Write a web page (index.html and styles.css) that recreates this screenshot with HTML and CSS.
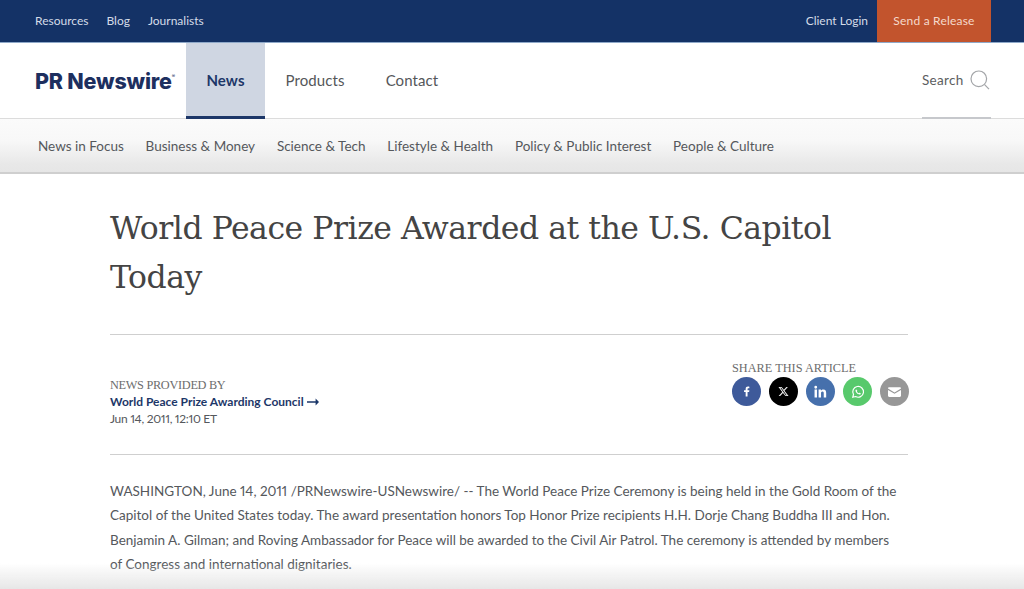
FILE: index.html
```html
<!DOCTYPE html>
<html lang="en">
<head>
<meta charset="utf-8">
<title>World Peace Prize Awarded at the U.S. Capitol Today</title>
<link rel="stylesheet" href="styles.css">
</head>
<body>
<header>
  <div class="topbar">
    <nav class="top-left">
      <a>Resources</a><a>Blog</a><a>Journalists</a>
    </nav>
    <div class="top-right">
      <a>Client Login</a>
      <a class="send">Send a Release</a>
    </div>
  </div>
  <div class="mainbar">
    <div class="logo">PR Newswire<sup class="reg">®</sup></div>
    <nav class="mainnav">
      <a class="active">News</a><a>Products</a><a>Contact</a>
    </nav>
    <div class="search">
      <span>Search</span>
      <svg class="search-icon" viewBox="0 0 20 20" width="20" height="20" fill="none" stroke="#a3a5a8" stroke-width="1.2"><circle cx="8.8" cy="8.8" r="7.8"/><path d="M14.6 14.6 19 19.2"/></svg>
    </div>
  </div>
  <nav class="subnav">
    <a>News in Focus</a><a>Business &amp; Money</a><a>Science &amp; Tech</a><a>Lifestyle &amp; Health</a><a>Policy &amp; Public Interest</a><a>People &amp; Culture</a>
  </nav>
</header>
<main class="article">
  <h1>World Peace Prize Awarded at the U.S. Capitol Today</h1>
  <div class="meta">
    <div class="provider">
      <div class="label">NEWS PROVIDED BY</div>
      <a class="org">World Peace Prize Awarding Council <svg class="arrow" viewBox="0 0 12 8" width="12" height="8"><path d="M0 3.2h8.6V.6L12 4 8.6 7.4V4.8H0z" fill="#1a3668"/></svg></a>
      <div class="date">Jun 14, 2011, 12:10 ET</div>
    </div>
    <div class="share">
      <div class="label">SHARE THIS ARTICLE</div>
      <div class="icons">
        <a class="circle fb"><svg viewBox="0 0 10 14" width="7" height="11"><path d="M6.5 14V7.700h2.200l.4-2.500H6.500V3.700c0-.8.3-1.200 1.300-1.200h1.300V.2C8.800.1 8 0 7.100 0 5.100 0 3.800 1.200 3.800 3.400v1.800H1.500v2.500h2.300V14z" fill="#fff"/></svg></a>
        <a class="circle xx"><svg viewBox="0 0 24 24" width="11" height="11"><path d="M18.200 2h3.400l-7.400 8.500L23 22h-6.800l-5.300-7-6.100 7H1.400l7.900-9.100L1 2h7l4.800 6.400zm-1.200 18h1.900L7 3.900H5z" fill="#eee"/></svg></a>
        <a class="circle li"><svg viewBox="0 0 24 24" width="13" height="13"><path d="M1 8.500h4.500V23H1zM3.200 1.500a2.600 2.600 0 1 1 0 5.200 2.600 2.600 0 0 1 0-5.200zM8.500 8.500h4.300v2c.6-1.200 2.100-2.400 4.300-2.400 4.600 0 5.400 3 5.400 6.900V23h-4.500v-7c0-1.700 0-3.800-2.300-3.800s-2.700 1.800-2.700 3.700V23H8.500z" fill="#fff"/></svg></a>
        <a class="circle wa"><svg viewBox="0 0 24 24" width="14" height="14"><path d="M3 21l1.300-4.700A9.200 9.200 0 1 1 7.900 19.800z" fill="none" stroke="#fff" stroke-width="2"/><path d="M9 7.500c-.5 0-1.300.7-1.300 2 0 2.800 3.600 6.800 6.900 6.800 1.400 0 2.200-1 2.200-1.700 0-.5-2-1.500-2.400-1.500s-.8 1-1.200 1c-.8 0-3-2.100-3-2.900 0-.4.800-.8.800-1.200S9.500 7.500 9 7.500z" fill="#fff"/></svg></a>
        <a class="circle em"><svg viewBox="0 0 16 12" width="13" height="10"><path d="M0 1.500C0 .7.700 0 1.500 0h13c.8 0 1.500.7 1.500 1.500v.3L8 6.600 0 1.800z" fill="#fff"/><path d="M0 3.500 8 8.300l8-4.800v7c0 .8-.7 1.500-1.500 1.500h-13C.7 12 0 11.300 0 10.500z" fill="#fff"/></svg></a>
      </div>
    </div>
  </div>
  <p class="body">WASHINGTON, June 14, 2011 /PRNewswire-USNewswire/ -- The World Peace Prize Ceremony is being held in the Gold Room of the Capitol of the United States today. The award presentation honors Top Honor Prize recipients H.H. Dorje Chang Buddha III and Hon. Benjamin A. Gilman; and Roving Ambassador for Peace will be awarded to the Civil Air Patrol. The ceremony is attended by members of Congress and international dignitaries.</p>
</main>
<div class="fade"></div>
</body>
</html>
```
FILE: styles.css
```css
* { box-sizing: border-box; }
html, body { margin: 0; padding: 0; height: 589px; overflow: hidden; }
body { font-family: "Lato", "Liberation Sans", sans-serif; color: #4a4a4a; background: #fff; font-variant-numeric: proportional-nums; }
a { color: inherit; text-decoration: none; }

.topbar { height: 43px; background: #143266; display: flex; justify-content: space-between; padding: 0 33px 0 35px; color: #d5dce8; font-size: 12px; border-bottom: 1px solid #8fa9c9; }
.top-left { display: flex; align-items: center; gap: 18px; padding-bottom: 1px; }
.top-right { display: flex; align-items: stretch; }
.top-right a { display: flex; align-items: center; padding-bottom: 1px; }
.send { background: #c2542d; color: #f5d9cb; width: 114px; justify-content: center; margin-left: 9px; letter-spacing: .2px; }

.mainbar { height: 76px; display: flex; padding: 0 33px 0 35px; border-bottom: 1px solid #dcdcdc; background: #fff; }
.logo { width: 151px; font-family: "Inter", "Liberation Sans", sans-serif; font-weight: 800; font-size: 21.500px; color: #1d2f5f; display: flex; align-items: center; letter-spacing: -.2px; white-space: nowrap; }
.reg { font-size: 5px; font-weight: 400; align-self: center; margin-top: -10px; }
.mainnav { display: flex; flex: 1; font-size: 15px; letter-spacing: .1px; color: #55575a; }
.mainnav a { display: flex; align-items: center; padding: 0 20.500px 2px; }
.mainnav a.active { background: #cfd6e2; color: #1d3768; font-weight: 700; border-bottom: 3px solid #1d3768; margin-bottom: -1px; width: 79px; justify-content: center; padding: 0; }
.search { width: 69px; display: flex; align-items: center; justify-content: space-between; font-size: 13.500px; color: #5c5e60; letter-spacing: .3px; border-bottom: 2px solid #c6c8cc; margin-bottom: -1px; }
.search-icon { flex: none; margin-right: 1px; }

.subnav { height: 55px; display: flex; align-items: center; gap: 21.800px; padding: 0 38px; font-size: 13.500px; color: #55585c; background: linear-gradient(#fbfbfb 0%, #f8f8f8 40%, #e8e8e8 85%, #e6e6e6 100%); border-bottom: 2px solid #cfcfcf; }

.article { padding: 0 116px 0 110px; }
h1 { margin: 30px 0 0; font-family: "DejaVu Serif", "Liberation Serif", serif; font-weight: 400; font-size: 31.500px; letter-spacing: -.48px; line-height: 49px; color: #444; height: 131px; border-bottom: 1px solid #cfcfcf; }
.meta { height: 120px; display: flex; justify-content: space-between; border-bottom: 1px solid #cfcfcf; }
.label { font-family: "Liberation Serif", serif; font-size: 12.300px; color: #6c6c6c; }
.provider { padding-top: 43px; }
.provider .label { letter-spacing: -.3px; }
.org { display: block; font-size: 12px; font-weight: 700; color: #1d3768; line-height: 17px; }
.arrow { vertical-align: 0; }
.date { font-size: 12px; color: #55585c; line-height: 17px; letter-spacing: -.3px; }
.share { padding-top: 26px; margin-right: -1px; }
.icons { display: flex; gap: 8px; margin-top: 1px; }
.circle { width: 29px; height: 29px; border-radius: 50%; display: flex; align-items: center; justify-content: center; }
.fb { background: #3e5a9a; }
.xx { background: #000; }
.li { background: #4670ac; }
.wa { background: #58c96c; }
.em { background: #979797; }
.body { margin: 24px 8px 0 0; font-size: 13.500px; line-height: 24.300px; color: #55585c; }

.fade { position: fixed; left: 0; right: 0; bottom: 0; height: 26px; background: linear-gradient(rgba(228,228,228,0), rgba(228,228,228,.9)); pointer-events: none; }
```
